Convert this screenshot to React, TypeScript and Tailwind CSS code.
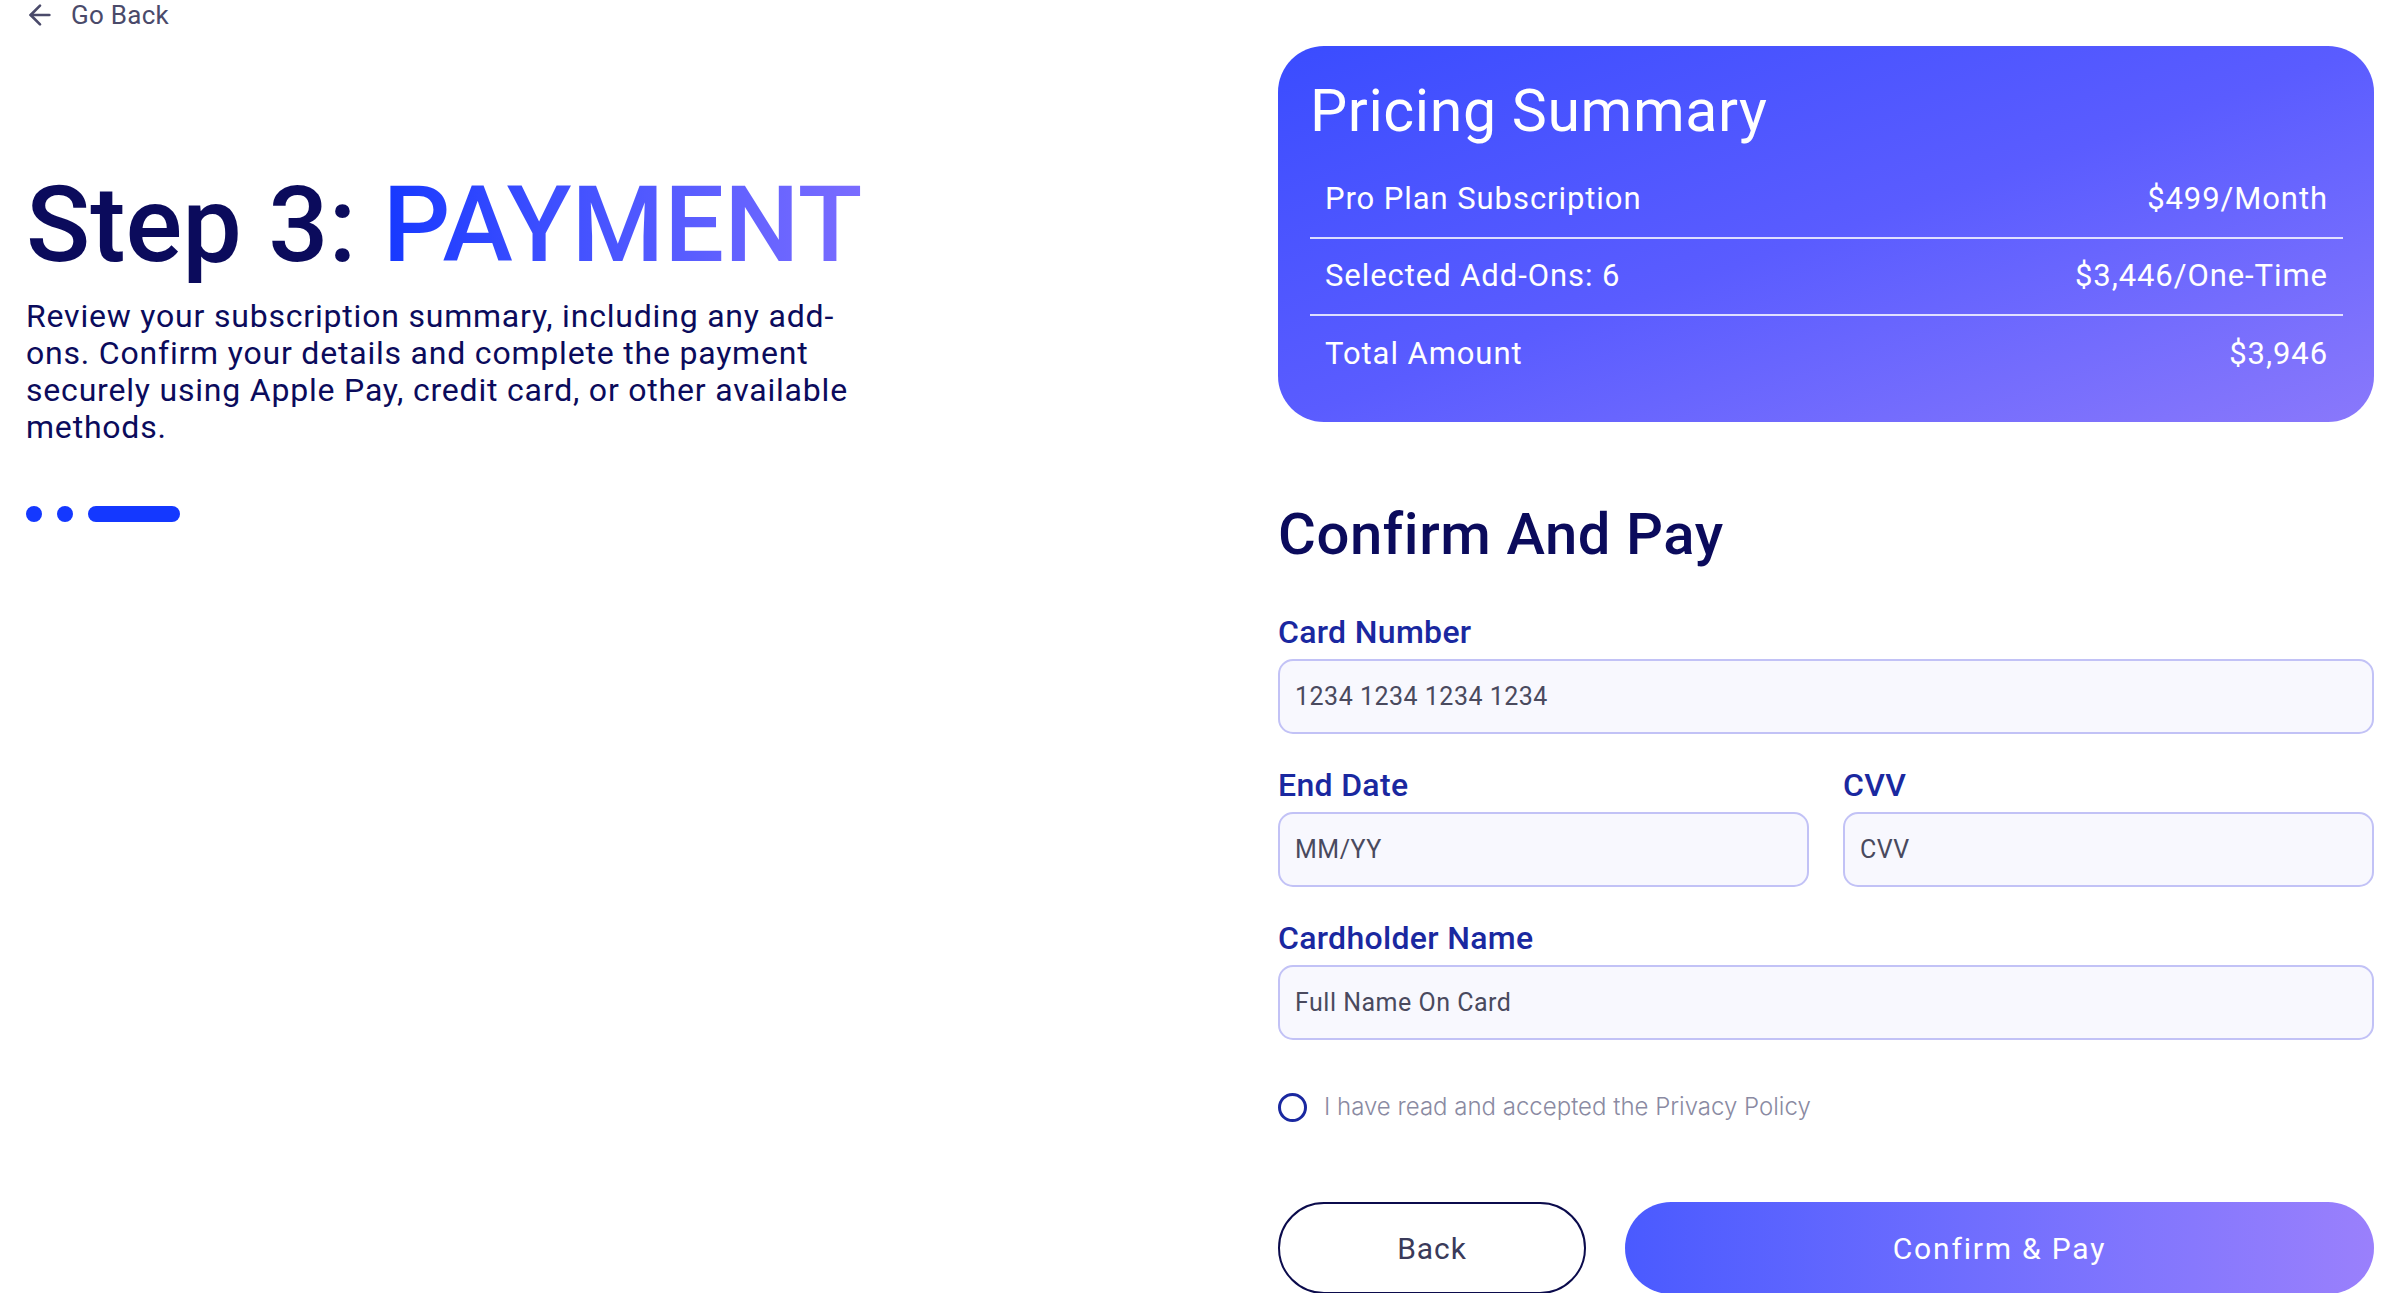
import React from 'react';
import { ArrowLeft } from 'lucide-react';

const rows = [
  { label: 'Pro Plan Subscription', value: '$499/Month' },
  { label: 'Selected Add-Ons: 6', value: '$3,446/One-Time' },
  { label: 'Total Amount', value: '$3,946' },
];

const Field = ({ label, placeholder }: { label: string; placeholder: string }) => (
  <div className="flex flex-col">
    <label className="text-[32px] leading-[37px] font-medium tracking-[0.01em] text-[#1a28a0]">{label}</label>
    <input
      placeholder={placeholder}
      className="mt-[8px] h-[75px] w-full rounded-[15px] border-2 border-[#c2c2f6] bg-[#f8f8fe] px-[15px] text-[25px] tracking-[0.02em] text-[#4a4a5e] placeholder:text-[#4a4a5e] outline-none"
    />
  </div>
);

const App = () => {
  return (
    <div className="min-h-screen bg-white font-['Roboto',sans-serif]">
      <div className="flex justify-between px-[26px]">
        {/* Left column */}
        <div className="flex flex-col">
          <a href="#" className="flex items-center gap-[15px] h-[30px] text-[26px] tracking-[0.01em] text-[#4a4a6a]">
            <ArrowLeft size={32} strokeWidth={2} className="-ml-[2px]" />
            Go Back
          </a>

          <h1 className="mt-[142px] text-[106px] leading-none font-medium text-[#0b0b5c]">
            Step 3:{' '}
            <span className="bg-linear-to-r from-[#1438ff] to-[#7a6cff] bg-clip-text text-transparent">
              PAYMENT
            </span>
          </h1>

          <p className="mt-[20px] w-[850px] text-[32px] leading-[37px] tracking-[0.025em] text-[#0b0b5c]">
            Review your subscription summary, including any add-ons. Confirm your details and complete the payment
            securely using Apple Pay, credit card, or other available methods.
          </p>

          <div className="mt-[60px] flex items-center gap-[15px]">
            <span className="h-[16px] w-[16px] rounded-full bg-[#1438ff]" />
            <span className="h-[16px] w-[16px] rounded-full bg-[#1438ff]" />
            <span className="h-[16px] w-[92px] rounded-full bg-[#1438ff]" />
          </div>
        </div>

        {/* Right column */}
        <div className="w-[1096px] flex flex-col pt-[46px]">
          {/* Pricing summary */}
          <div className="rounded-[46px] bg-linear-to-br from-[#3a4cff] via-[#5a5cff] to-[#8a78fb] pt-[35px] pb-[29px] pl-[32px] pr-[31px] text-white">
            <h2 className="text-[59px] leading-none tracking-[0.01em]">Pricing Summary</h2>
            <div className="mt-[22px]">
              {rows.map((row, i) => (
                <div
                  key={row.label}
                  className={`flex h-[77px] items-center justify-between px-[15px] text-[31px] tracking-[0.03em] ${
                    i < rows.length - 1 ? 'border-b-2 border-white/80' : ''
                  }`}
                >
                  <span>{row.label}</span>
                  <span>{row.value}</span>
                </div>
              ))}
            </div>
          </div>

          {/* Confirm and pay */}
          <h2 className="mt-[83px] text-[58px] leading-none font-medium tracking-[0.01em] text-[#0b0b5c]">
            Confirm And Pay
          </h2>

          <div className="mt-[51px] flex flex-col gap-[33px]">
            <Field label="Card Number" placeholder="1234 1234 1234 1234" />
            <div className="grid grid-cols-2 gap-[34px]">
              <Field label="End Date" placeholder="MM/YY" />
              <Field label="CVV" placeholder="CVV" />
            </div>
            <Field label="Cardholder Name" placeholder="Full Name On Card" />
          </div>

          <label className="mt-[49px] flex items-center gap-[17px] cursor-pointer">
            <span className="h-[29px] w-[29px] rounded-full border-[3px] border-[#1a28a0]" />
            <span className="font-['Inter',sans-serif] text-[24px] font-light text-[#8a8aa2]">
              I have read and accepted the Privacy Policy
            </span>
          </label>

          <div className="mt-[77px] flex gap-[39px]">
            <button className="h-[92px] w-[308px] rounded-full border-2 border-[#0b0b4c] bg-white text-[30px] tracking-[0.03em] text-[#3a3a5a]">
              Back
            </button>
            <button className="h-[92px] flex-1 rounded-full bg-linear-to-r from-[#4a5aff] to-[#9a80fc] text-[30px] tracking-[0.06em] text-white">
              Confirm &amp; Pay
            </button>
          </div>
        </div>
      </div>
    </div>
  );
};

export default App;
